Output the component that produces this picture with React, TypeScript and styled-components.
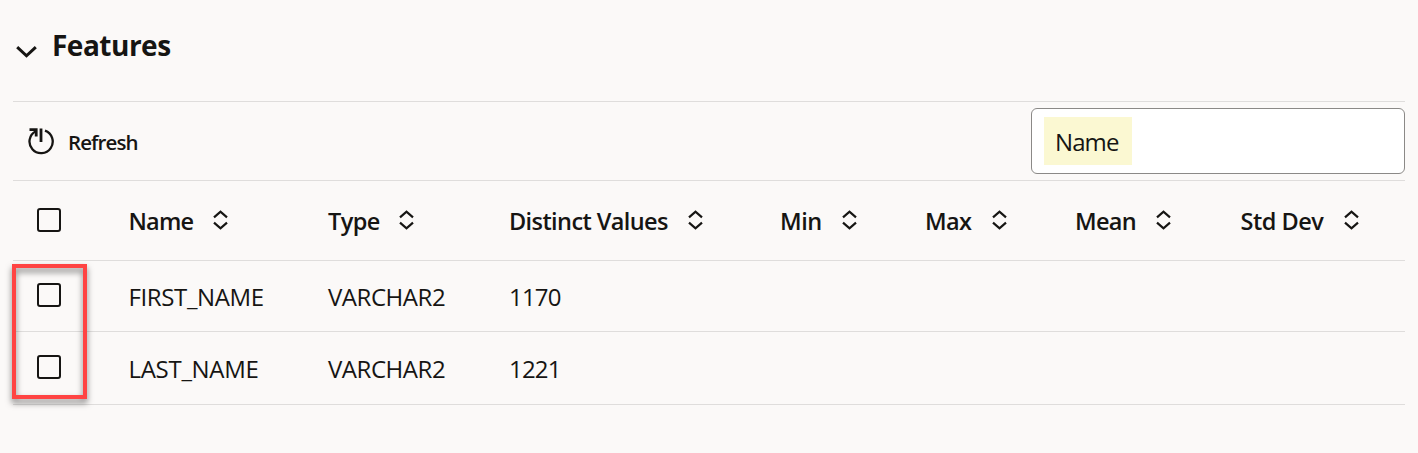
import React from "react";
import styled, { createGlobalStyle } from "styled-components";

const GlobalStyle = createGlobalStyle`
  * { box-sizing: border-box; }
  body {
    margin: 0;
    background: #fbf9f8;
    color: #161513;
    font-family: "Open Sans", "Noto Sans", sans-serif;
  }
`;

const Page = styled.main`
  height: 453px;
  padding: 0 13px;
  overflow: hidden;
`;

const SectionHeader = styled.header`
  display: flex;
  height: 101px;
  padding: 25px 0 0 3px;
`;

const Chevron = styled.svg`
  width: 22px;
  height: 14px;
  margin: 20px 14px 0 0;
`;

const Title = styled.h2`
  margin: 0;
  font-size: 28px;
  line-height: 40px;
  font-weight: 700;
  letter-spacing: -0.5px;
`;

const Toolbar = styled.div`
  display: flex;
  align-items: center;
  justify-content: space-between;
  height: 79px;
  border-top: 1px solid #dfdddc;
`;

const RefreshButton = styled.button`
  display: flex;
  align-items: center;
  gap: 13px;
  height: 40px;
  margin: 2px 0 0;
  padding: 0 0 0 14px;
  border: 0;
  background: none;
  color: inherit;
  font: 550 20.5px/40px "Open Sans", "Noto Sans", sans-serif;
  letter-spacing: -0.9px;
`;

const RefreshIcon = styled.svg`
  width: 28px;
  height: 28px;
  margin-top: -3px;
`;

const SearchField = styled.div`
  display: flex;
  align-items: center;
  width: 374px;
  height: 66px;
  padding-left: 12px;
  border: 1px solid #8b8987;
  border-radius: 6px;
  background: #fff;
`;

const SearchTerm = styled.span`
  width: 88px;
  height: 48px;
  padding-left: 11px;
  background: #fbf8d2;
  font-size: 24px;
  line-height: 49px;
  letter-spacing: -0.9px;
`;

const Table = styled.div`
  position: relative;
`;

const Rows = styled.div`
  border-bottom: 1px solid #dfdddc;
`;

const Row = styled.div<{ $height: number }>`
  display: grid;
  grid-template-columns: 115.5px 199.5px 181px 271px 145px 150px 165.5px 1fr;
  align-items: center;
  height: ${(p) => p.$height}px;
  border-top: 1px solid #dfdddc;
`;

const Checkbox = styled.span<{ $lift: number }>`
  width: 24px;
  height: 24px;
  margin: 0 0 ${(p) => p.$lift}px 24px;
  border: 2px solid #161513;
  border-radius: 3px;
`;

const HeaderCell = styled.div`
  display: flex;
  align-items: center;
  height: 40px;
  gap: 20px;
  font-size: 23.5px;
  line-height: 40px;
  font-weight: 600;
`;

const Label = styled.span<{ $width: number; $spacing: number }>`
  width: ${(p) => p.$width}px;
  white-space: nowrap;
  letter-spacing: ${(p) => p.$spacing}px;
`;

const SortIcon = styled.svg`
  width: 15px;
  height: 20px;
  margin-top: -2px;
`;

const Cell = styled.div<{ $spacing: number }>`
  margin-top: 1px;
  font-size: 24px;
  line-height: 40px;
  white-space: nowrap;
  letter-spacing: ${(p) => p.$spacing}px;
`;

const SelectionFrame = styled.div`
  position: absolute;
  top: 84px;
  left: -1px;
  width: 75px;
  height: 135px;
  border: 4px solid #ff4443;
  filter: drop-shadow(0 4px 3px rgba(0, 0, 0, 0.5));
  pointer-events: none;
`;

const columns = [
  { label: "Name", width: 64.5, spacing: -0.8 },
  { label: "Type", width: 51, spacing: -0.6 },
  { label: "Distinct Values", width: 158.5, spacing: -0.6 },
  { label: "Min", width: 42, spacing: -0.5 },
  { label: "Max", width: 46.5, spacing: -0.6 },
  { label: "Mean", width: 61, spacing: -0.7 },
  { label: "Std Dev", width: 83.5, spacing: -0.5 },
];

const features = [
  { name: "FIRST_NAME", type: "VARCHAR2", distinct: "1170", height: 71, spacing: -0.38 },
  { name: "LAST_NAME", type: "VARCHAR2", distinct: "1221", height: 73, spacing: -0.3 },
];

export default function App() {
  return (
    <>
      <GlobalStyle />
      <Page>
        <SectionHeader>
          <Chevron viewBox="0 0 22 14" fill="none" stroke="#161513" strokeWidth="3">
            <path d="M1.2 2.2 L10.5 10.8 L19.8 2.2" />
          </Chevron>
          <Title>Features</Title>
        </SectionHeader>
        <Toolbar>
          <RefreshButton>
            <RefreshIcon viewBox="0 0 28 28" fill="none" stroke="#161513" strokeWidth="2.3">
              <path d="M8.8 4.2 A11.6 11.6 0 1 0 18 3.6" />
              <path d="M2.5 2.6 H9.2 V9.5" strokeWidth="2.8" />
              <path d="M7 3 H9.2 V7 Z" strokeWidth="1" fill="#161513" />
              <path d="M14 1.5 V15" strokeWidth="2.8" />
            </RefreshIcon>
            Refresh
          </RefreshButton>
          <SearchField>
            <SearchTerm>Name</SearchTerm>
          </SearchField>
        </Toolbar>
        <Table>
          <Rows>
            <Row $height={80}>
              <Checkbox $lift={2} />
              {columns.map((c) => (
                <HeaderCell key={c.label}>
                  <Label $width={c.width} $spacing={c.spacing}>{c.label}</Label>
                  <SortIcon viewBox="0 0 15 20" fill="none" stroke="#161513" strokeWidth="2.2">
                    <path d="M1 7.4 L7.5 1.6 L14 7.4 M1 12.6 L7.5 18.4 L14 12.6" />
                  </SortIcon>
                </HeaderCell>
              ))}
            </Row>
            {features.map((f) => (
              <Row key={f.name} $height={f.height}>
                <Checkbox $lift={3} />
                <Cell $spacing={f.spacing}>{f.name}</Cell>
                <Cell $spacing={-0.45}>{f.type}</Cell>
                <Cell $spacing={-0.8}>{f.distinct}</Cell>
              </Row>
            ))}
          </Rows>
          <SelectionFrame />
        </Table>
      </Page>
    </>
  );
}
